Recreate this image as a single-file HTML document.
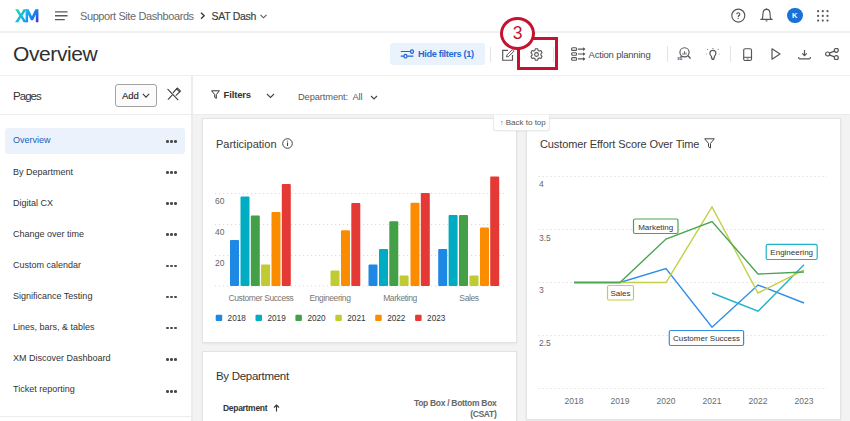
<!DOCTYPE html>
<html><head><meta charset="utf-8">
<style>
*{box-sizing:border-box;margin:0;padding:0}
html,body{width:850px;height:421px;overflow:hidden;background:#fff;font-family:"Liberation Sans",sans-serif;color:#2f3133}
.a{position:absolute;white-space:nowrap}
.hdr{position:absolute;left:0;top:0;width:850px;height:33px;background:#fff;border-bottom:2px solid #f0f0f0}
.title{position:absolute;left:0;top:33px;width:850px;height:43px;background:#fff;border-bottom:1px solid #efefef}
.side{position:absolute;left:0;top:76px;width:193px;height:345px;background:#fff;border-right:2px solid #ececec}
.main{position:absolute;left:193px;top:76px;width:657px;height:345px;background:#f3f3f3}
.fbar{position:absolute;left:193px;top:76px;width:657px;height:39px;background:#fff;border-bottom:1px solid #ececec}
.card{position:absolute;background:#fff;border:1px solid #e3e3e3;box-shadow:0 1px 2px rgba(0,0,0,.06)}
.item{position:absolute;left:13px;font-size:9px;color:#333;line-height:12px}
.dots{position:absolute;left:166px;width:11px;height:3px}
.dots i{position:absolute;top:0;width:2.7px;height:2.7px;border-radius:50%;background:#4a4a4a}
.sep{position:absolute;width:1px;background:#e3e3e3}
</style></head><body>

<!-- header -->
<div class="hdr"></div>
<svg class="a" style="left:15px;top:9px" width="25" height="14" viewBox="0 0 25 14">
 <defs><linearGradient id="xm" gradientUnits="userSpaceOnUse" x1="2" y1="1" x2="22" y2="14"><stop offset="0" stop-color="#1ed8b0"/><stop offset=".45" stop-color="#16a9ee"/><stop offset=".8" stop-color="#1d6fe8"/><stop offset="1" stop-color="#4a2de0"/></linearGradient></defs>
 <path fill="url(#xm)" d="M0.2 0.3h3.1l2.6 4.4 2.6-4.4h3.1L7.5 6.7l4.2 6.6H8.6L5.9 8.8 3.2 13.3H0l4.3-6.6z"/>
 <path fill="url(#xm)" d="M10.6 13.3V0.3h3l3.35 7 3.35-7h3.1v13h-2.6V5.6l-2.8 5.6h-2.1l-2.8-5.6v7.7z"/>
</svg>
<svg class="a" style="left:55px;top:11px" width="13" height="10" viewBox="0 0 13 10"><path d="M0 0.95h12.6M0 4.75h12.6M0 8.55h9.8" stroke="#5a5a5a" stroke-width="1.3"/></svg>
<div class="a" style="left:80px;top:10px;font-size:11px;color:#6a6a6a;letter-spacing:-0.4px">Support Site Dashboards</div>
<svg class="a" style="left:199.5px;top:12px" width="6" height="8" viewBox="0 0 6 8"><path d="M1 0.8l3.2 3L1 6.8" stroke="#333" stroke-width="1.3" fill="none"/></svg>
<div class="a" style="left:211.5px;top:10px;font-size:10.5px;color:#3a3a3a;letter-spacing:-0.3px;-webkit-text-stroke:0.15px #3a3a3a">SAT Dash</div>
<svg class="a" style="left:259.5px;top:13.5px" width="7" height="5" viewBox="0 0 7 5"><path d="M0.5 0.8l3 3 3-3" stroke="#555" stroke-width="1.05" fill="none"/></svg>

<svg class="a" style="left:730px;top:8px" width="16" height="16" viewBox="0 0 16 16"><circle cx="8.3" cy="7.6" r="6.5" stroke="#555" stroke-width="1.15" fill="none"/><path d="M6.8 6.2a1.5 1.5 0 1 1 2.1 1.4c-.4.2-.6.5-.6.9v.4" stroke="#555" stroke-width="1.15" fill="none"/><circle cx="8.3" cy="10.3" r=".65" fill="#555"/></svg>
<svg class="a" style="left:759px;top:7px" width="15" height="16" viewBox="0 0 15 16"><path d="M1.8 12.3h11.4" stroke="#555" stroke-width="1.2" stroke-linecap="round"/><path d="M3 12.2c.8-.9.9-2.5.9-5 0-2.8 1.6-4.8 3.6-4.8s3.6 2 3.6 4.8c0 2.5.1 4.1.9 5" stroke="#555" stroke-width="1.15" fill="none"/><circle cx="7.5" cy="2" r=".8" fill="#555"/><path d="M6.6 13.9h1.8" stroke="#555" stroke-width="1.1"/></svg>
<div class="a" style="left:787px;top:7.8px;width:15.5px;height:15.5px;border-radius:50%;background:#1b6fd8;color:#fff;font-size:7.5px;font-weight:700;text-align:center;line-height:15.5px">K</div>
<svg class="a" style="left:817px;top:10px" width="12" height="12" viewBox="0 0 12 12"><g fill="#5a5a5a"><circle cx="1.1" cy="1.2" r="1.1"/><circle cx="5.8" cy="1.2" r="1.1"/><circle cx="10.5" cy="1.2" r="1.1"/><circle cx="1.1" cy="5.9" r="1.1"/><circle cx="5.8" cy="5.9" r="1.1"/><circle cx="10.5" cy="5.9" r="1.1"/><circle cx="1.1" cy="10.6" r="1.1"/><circle cx="5.8" cy="10.6" r="1.1"/><circle cx="10.5" cy="10.6" r="1.1"/></g></svg>

<!-- title row -->
<div class="title"></div>
<div class="a" style="left:13px;top:41.5px;font-size:21px;color:#2d3033;letter-spacing:-0.4px">Overview</div>
<div class="a" style="left:389.5px;top:43px;width:95px;height:22px;background:#eaf2fc;border-radius:3px"></div>
<svg class="a" style="left:400px;top:48px" width="15" height="12" viewBox="0 0 15 12"><g stroke="#1a66d2" stroke-width="1.2" fill="none"><path d="M0.8 3.5h9.2M0.8 8.2h3.2M7.2 8.2h6.2"/><rect x="10.6" y="1.8" width="2.8" height="3.6" rx="1.3"/><rect x="4.1" y="6.4" width="2.8" height="3.6" rx="1.3"/></g></svg>
<div class="a" style="left:418px;top:48.5px;font-size:9.2px;font-weight:700;color:#1f6bd6;letter-spacing:-0.35px">Hide filters (1)</div>
<div class="sep" style="left:490px;top:47px;height:15px"></div>
<svg class="a" style="left:502px;top:49px" width="13" height="12" viewBox="0 0 13 12"><path d="M6 1.3H0.7v9.9h9.8V6" stroke="#555" stroke-width="1.15" fill="none"/><path d="M4.6 7.9l0.4-2 5.3-5.3 1.6 1.6-5.3 5.3z" stroke="#555" stroke-width="1" fill="none"/></svg>
<svg class="a" style="left:530px;top:48px" width="13" height="13" viewBox="0 0 13 13"><path d="M5.3 0.8h2.4l.4 1.6 1.2.7 1.6-.5 1.2 2.1-1.2 1.1v1.4l1.2 1.1-1.2 2.1-1.6-.5-1.2.7-.4 1.6H5.3l-.4-1.6-1.2-.7-1.6.5-1.2-2.1 1.2-1.1V5.8L.9 4.7l1.2-2.1 1.6.5 1.2-.7z" stroke="#555" stroke-width="1.1" fill="none" stroke-linejoin="round"/><circle cx="6.5" cy="6.5" r="1.9" stroke="#555" stroke-width="1.1" fill="none"/></svg>
<div class="sep" style="left:553px;top:47px;height:15px"></div>
<svg class="a" style="left:571px;top:47px" width="15" height="14" viewBox="0 0 15 14"><g stroke="#555" stroke-width="1.1" fill="none"><rect x=".6" y=".8" width="5" height="2.6" rx="1"/><rect x=".6" y="5.7" width="5" height="2.6" rx="1"/><rect x=".6" y="10.6" width="5" height="2.6" rx="1"/><path d="M7 2.1h6.5M7 7h6.5M7 11.9h6.5"/></g><g fill="#555"><path d="M12 0.3l2.5 1.8L12 3.9z"/><path d="M12 5.2l2.5 1.8L12 8.8z"/><path d="M12 10.1l2.5 1.8L12 13.7z"/></g></svg>
<div class="a" style="left:588.5px;top:48.5px;font-size:9.5px;color:#4a4a4a;letter-spacing:-0.2px">Action planning</div>
<div class="sep" style="left:667px;top:46px;height:16px"></div>
<svg class="a" style="left:677px;top:46px" width="15" height="15" viewBox="0 0 15 15"><circle cx="7.5" cy="6.3" r="4.6" stroke="#555" stroke-width="1.15" fill="none"/><path d="M10.9 9.7l2.7 2.8" stroke="#555" stroke-width="1.3"/><path d="M6 8.2V6.8M7.5 8.2V5.2M9 8.2V6.3" stroke="#777" stroke-width="1"/><path d="M5.2 8.4h4.4" stroke="#888" stroke-width=".6"/><text x="0.2" y="14" font-family="Liberation Sans" font-size="4.6" font-weight="700" fill="#555">x8</text></svg>
<svg class="a" style="left:705px;top:46px" width="15" height="15" viewBox="0 0 15 15"><path d="M6.5 12.2v-1.6c0-.6-1.6-1.5-1.6-3.2a3 3 0 0 1 6 0c0 1.7-1.6 2.6-1.6 3.2v1.6z" stroke="#555" stroke-width="1.15" fill="none" stroke-linejoin="round"/><path d="M6.6 13.4h2.6" stroke="#555" stroke-width="1.1"/><g fill="#888"><circle cx="2.6" cy="3.4" r=".55"/><circle cx="13.2" cy="3.4" r=".55"/><circle cx="1.3" cy="8.1" r=".5"/><circle cx="14.2" cy="8.1" r=".5"/><path d="M7.1 1.9h1.6v.8H7.1z"/></g></svg>
<div class="sep" style="left:730px;top:46px;height:16px"></div>
<svg class="a" style="left:742.5px;top:47.5px" width="10" height="14" viewBox="0 0 10 14"><rect x=".7" y=".7" width="7.8" height="11.8" rx="1.5" stroke="#555" stroke-width="1.15" fill="none"/><path d="M.7 9.3h7.8" stroke="#555" stroke-width="1"/><path d="M3.6 11h2" stroke="#555" stroke-width="1"/></svg>
<svg class="a" style="left:771px;top:48px" width="10" height="12" viewBox="0 0 10 12"><path d="M1 .8v10.4L9 6z" stroke="#555" stroke-width="1.2" fill="none" stroke-linejoin="round"/></svg>
<svg class="a" style="left:797.5px;top:49.5px" width="13" height="10" viewBox="0 0 13 10"><path d="M6.5 0v5.6M4.2 3.4l2.3 2.3 2.3-2.3" stroke="#555" stroke-width="1.2" fill="none"/><path d="M.7 6.9v.9c0 .7.4 1.1 1.1 1.1h9.4c.7 0 1.1-.4 1.1-1.1v-.9" stroke="#555" stroke-width="1.15" fill="none"/></svg>
<svg class="a" style="left:825px;top:48px" width="14" height="12" viewBox="0 0 14 12"><g stroke="#555" stroke-width="1.2" fill="none"><circle cx="2.6" cy="6" r="2"/><circle cx="11.3" cy="2.3" r="2"/><circle cx="11.3" cy="9.7" r="2"/><path d="M4.4 5.1l5-2M4.4 6.9l5 2"/></g></svg>

<!-- annotation -->
<div class="a" style="left:517px;top:37px;width:41px;height:32.5px;border:3px solid #c41230"></div>
<div class="a" style="left:500px;top:16.5px;width:35px;height:33px;border:3px solid #c41230;border-radius:50%;background:#fff"></div>
<div class="a" style="left:500px;top:23px;width:35px;text-align:center;font-size:17.5px;color:#c41230">3</div>

<!-- sidebar -->
<div class="side"></div>
<div class="a" style="left:0;top:114px;width:191px;height:1px;background:#ececec"></div>
<div class="a" style="left:13px;top:90px;font-size:11.5px;color:#333;letter-spacing:-0.95px">Pages</div>
<div class="a" style="left:115px;top:84px;width:41.5px;height:23px;border:1px solid #a3a3a3;border-radius:3px;background:#fbfbfb"></div>
<div class="a" style="left:122px;top:89.5px;font-size:9.5px;color:#2a2a2a;-webkit-text-stroke:0.15px #2a2a2a">Add</div>
<svg class="a" style="left:142px;top:93px" width="8" height="5" viewBox="0 0 8 5"><path d="M0.8 0.9l3.2 3.2 3.2-3.2" stroke="#3a3a3a" stroke-width="1.1" fill="none"/></svg>
<svg class="a" style="left:166px;top:87px" width="15" height="14" viewBox="0 0 15 14"><g stroke="#3a3a3a" stroke-width="1.05" fill="none" stroke-linecap="round" stroke-linejoin="round"><path d="M1.9 2.4L12 12.8"/><path d="M2.2 12.3l3.9-4.1"/><path d="M7.2 5.6l3.3-3.8 3.2 3.1-3.6 3.4"/><path d="M10.5 1.8l1 -0.8 2.9 2.9-0.7 1"/></g></svg>
<div class="a" style="left:5px;top:127.5px;width:180px;height:26px;background:#ebf2fc;border-radius:3px"></div>
<div class="item" style="top:134px;color:#1b5eb8">Overview</div>
<div class="item" style="top:165.5px">By Department</div>
<div class="item" style="top:196.5px">Digital CX</div>
<div class="item" style="top:227.5px">Change over time</div>
<div class="item" style="top:258.5px">Custom calendar</div>
<div class="item" style="top:289.5px">Significance Testing</div>
<div class="item" style="top:320.5px">Lines, bars, &amp; tables</div>
<div class="item" style="top:352px">XM Discover Dashboard</div>
<div class="item" style="top:383px">Ticket reporting</div>
<div class="dots" style="top:140px"><i style="left:0"></i><i style="left:4px"></i><i style="left:8px"></i></div>
<div class="dots" style="top:171px"><i style="left:0"></i><i style="left:4px"></i><i style="left:8px"></i></div>
<div class="dots" style="top:202px"><i style="left:0"></i><i style="left:4px"></i><i style="left:8px"></i></div>
<div class="dots" style="top:233px"><i style="left:0"></i><i style="left:4px"></i><i style="left:8px"></i></div>
<div class="dots" style="top:264.5px"><i style="left:0"></i><i style="left:4px"></i><i style="left:8px"></i></div>
<div class="dots" style="top:295.5px"><i style="left:0"></i><i style="left:4px"></i><i style="left:8px"></i></div>
<div class="dots" style="top:326.5px"><i style="left:0"></i><i style="left:4px"></i><i style="left:8px"></i></div>
<div class="dots" style="top:358px"><i style="left:0"></i><i style="left:4px"></i><i style="left:8px"></i></div>
<div class="dots" style="top:390px"><i style="left:0"></i><i style="left:4px"></i><i style="left:8px"></i></div>
<div class="a" style="left:0;top:416px;width:191px;height:1px;background:#ececec"></div>

<!-- main -->
<div class="main"></div>
<div class="fbar"></div>
<svg class="a" style="left:211px;top:90px" rx="1" width="9" height="9" viewBox="0 0 9 9"><path d="M.6 .8h7.8L5.3 4.6v3.8L3.7 7.4V4.6z" stroke="#333" stroke-width="1" fill="none" stroke-linejoin="round"/></svg>
<div class="a" style="left:223.5px;top:89px;font-size:9.5px;font-weight:700;color:#333;letter-spacing:-0.15px">Filters</div>
<svg class="a" style="left:265.5px;top:93px" width="9" height="6" viewBox="0 0 9 6"><path d="M1 1l3.5 3.5L8 1" stroke="#444" stroke-width="1.1" fill="none"/></svg>
<div class="a" style="left:298px;top:92px;font-size:9.3px;color:#5a5a5a;letter-spacing:-0.1px">Department:&nbsp; All</div>
<svg class="a" style="left:370px;top:95px" width="8" height="6" viewBox="0 0 8 6"><path d="M1 1l3 3 3-3" stroke="#444" stroke-width="1.1" fill="none"/></svg>

<!-- card 1 participation -->
<div class="card" style="left:202px;top:117.5px;width:314.6px;height:225px"></div>
<div class="a" style="left:216px;top:137.8px;font-size:11px;color:#3a3a3a">Participation</div>
<svg class="a" style="left:281.5px;top:137.5px" width="11" height="11" viewBox="0 0 11 11"><circle cx="5.5" cy="5.5" r="4.8" stroke="#444" stroke-width="1" fill="none"/><path d="M5.5 4.5v3.5" stroke="#444" stroke-width="1.1"/><circle cx="5.5" cy="3" r=".6" fill="#444"/></svg>

<svg class="a" style="left:202px;top:117px" width="314" height="225" viewBox="202 117 314 225">
 <g stroke="#d9d9d9" stroke-width="1" stroke-dasharray="1.2 2.8">
  <path d="M215 193.5H504"/><path d="M215 224.5H504"/><path d="M215 255.5H504"/><path d="M215 286H504"/>
 </g>
 <g font-family="Liberation Sans" font-size="8.5" fill="#666">
  <text x="215" y="204">60</text><text x="215" y="235">40</text><text x="215" y="266">20</text>
 </g>
 <g>
  <rect x="230" y="240" rx="1" width="9" height="46" fill="#1e88e5"/>
  <rect x="240.5" y="196.5" rx="1" width="9" height="89.5" fill="#00acc1"/>
  <rect x="250.8" y="215.5" rx="1" width="9" height="70.5" fill="#43a047"/>
  <rect x="261.1" y="264.5" rx="1" width="9" height="21.5" fill="#c0ca33"/>
  <rect x="271.5" y="212" rx="1" width="9" height="74" fill="#fb8c00"/>
  <rect x="281.8" y="184" rx="1" width="9" height="102" fill="#e53935"/>

  <rect x="330.5" y="270.6" rx="1" width="9" height="15.4" fill="#c0ca33"/>
  <rect x="341" y="230.2" rx="1" width="9" height="55.8" fill="#fb8c00"/>
  <rect x="351.3" y="203" rx="1" width="9" height="83" fill="#e53935"/>

  <rect x="368.5" y="264.5" rx="1" width="9" height="21.5" fill="#1e88e5"/>
  <rect x="379" y="249" rx="1" width="9" height="37" fill="#00acc1"/>
  <rect x="389.3" y="221.2" rx="1" width="9" height="64.8" fill="#43a047"/>
  <rect x="399.6" y="275.6" rx="1" width="9" height="10.4" fill="#c0ca33"/>
  <rect x="410.5" y="202.7" rx="1" width="9" height="83.3" fill="#fb8c00"/>
  <rect x="420.8" y="193.1" rx="1" width="9" height="92.9" fill="#e53935"/>

  <rect x="438.2" y="249" rx="1" width="9" height="37" fill="#1e88e5"/>
  <rect x="448.6" y="215" rx="1" width="9" height="71" fill="#00acc1"/>
  <rect x="459" y="215" rx="1" width="9" height="71" fill="#43a047"/>
  <rect x="469.5" y="275.6" rx="1" width="9" height="10.4" fill="#c0ca33"/>
  <rect x="480" y="227.4" rx="1" width="9" height="58.6" fill="#fb8c00"/>
  <rect x="490.2" y="176.4" rx="1" width="9" height="109.6" fill="#e53935"/>
 </g>
 <g font-family="Liberation Sans" font-size="8.5" fill="#777" text-anchor="middle" letter-spacing="-0.4">
  <text x="261" y="301">Customer Success</text>
  <text x="330" y="301">Engineering</text>
  <text x="400" y="301">Marketing</text>
  <text x="469" y="301">Sales</text>
 </g>
 <g>
  <rect x="215.7" y="314.7" width="6.5" height="6.3" rx="1" fill="#1e88e5"/>
  <rect x="255.5" y="314.7" width="6.5" height="6.3" rx="1" fill="#00acc1"/>
  <rect x="295.4" y="314.7" width="6.5" height="6.3" rx="1" fill="#43a047"/>
  <rect x="335.3" y="314.7" width="6.5" height="6.3" rx="1" fill="#c0ca33"/>
  <rect x="375.2" y="314.7" width="6.5" height="6.3" rx="1" fill="#fb8c00"/>
  <rect x="415.1" y="314.7" width="6.5" height="6.3" rx="1" fill="#e53935"/>
 </g>
 <g font-family="Liberation Sans" font-size="8.2" fill="#333">
  <text x="227.6" y="321.3">2018</text><text x="267.5" y="321.3">2019</text><text x="307.4" y="321.3">2020</text>
  <text x="347.3" y="321.3">2021</text><text x="387.2" y="321.3">2022</text><text x="427.1" y="321.3">2023</text>
 </g>
</svg>


<div class="a" style="z-index:5;left:493px;top:114px;width:57px;height:17px;background:#fff;border:1px solid #e9e9e9;border-top:1px solid #f0f0f0;border-radius:0 0 3px 3px;font-size:8px;color:#555;line-height:15px;padding-left:6px;box-shadow:0 1px 1px rgba(0,0,0,.04)"><span style="font-size:7px;position:relative;top:-0.5px">↑</span> Back to top</div>

<!-- card 2 line chart -->
<div class="card" style="left:526px;top:118px;width:314.6px;height:302px"></div>
<div class="a" style="left:540px;top:137.8px;font-size:11px;color:#3a3a3a;letter-spacing:-0.1px">Customer Effort Score Over Time</div>
<svg class="a" style="left:704px;top:138px" width="11" height="11" viewBox="0 0 11 11"><path d="M.7 .8h9.6L6.5 5.4v4.6L4.5 8.8V5.4z" stroke="#444" stroke-width="1" fill="none" stroke-linejoin="round"/></svg>

<svg class="a" style="left:527px;top:118px" width="313" height="302" viewBox="527 118 313 302">
 <g stroke="#d9d9d9" stroke-width="1" stroke-dasharray="1.2 2.8">
  <path d="M538.5 176.5H827"/><path d="M538.5 229.5H827"/><path d="M538.5 282.5H827"/><path d="M538.5 335.5H827"/><path d="M538.5 388.5H827"/>
 </g>
 <g font-family="Liberation Sans" font-size="8.5" fill="#666">
  <text x="539" y="187">4</text><text x="539" y="241">3.5</text><text x="539" y="293">3</text><text x="539" y="346">2.5</text>
 </g>
 <g font-family="Liberation Sans" font-size="8.5" fill="#6b6b6b" text-anchor="middle">
  <text x="574" y="404">2018</text><text x="620" y="404">2019</text><text x="666" y="404">2020</text>
  <text x="712" y="404">2021</text><text x="758" y="404">2022</text><text x="804" y="404">2023</text>
 </g>
 <g fill="none" stroke-width="1.4" stroke-linejoin="miter">
  <polyline points="574,282.5 620,282.5 666,268.5 712,327.3 758,285 804,303" stroke="#2f8fe6"/>
  <polyline points="712,293 758,311.2 804,264.7" stroke="#1fb2c8"/>
  <polyline points="574,282.5 620,282.5 666,282.5 712,207 758,293 804,270" stroke="#c4cf47"/>
  <polyline points="574,282.5 620,282.5 666,239 712,221.5 758,274 804,272" stroke="#4aa552"/>
 </g>
 <g font-family="Liberation Sans" font-size="8" fill="#333">
  <rect x="633.5" y="219" width="44.5" height="14.5" rx="1.5" fill="#fff" stroke="#4aa552" stroke-width="1.2"/>
  <text x="655.7" y="229.5" text-anchor="middle">Marketing</text>
  <rect x="607.5" y="285.5" width="26" height="14.5" rx="1.5" fill="#fff" stroke="#c4cf47" stroke-width="1.2"/>
  <text x="620.5" y="296" text-anchor="middle">Sales</text>
  <rect x="766.2" y="244.4" width="51" height="15.1" rx="1.5" fill="#fff" stroke="#1fb2c8" stroke-width="1.2"/>
  <text x="791.7" y="255" text-anchor="middle">Engineering</text>
  <rect x="669.3" y="330.5" width="74.3" height="15" rx="1.5" fill="#fff" stroke="#2f8fe6" stroke-width="1.2"/>
  <text x="706.5" y="341.3" text-anchor="middle">Customer Success</text>
 </g>
</svg>

<!-- card 3 -->
<div class="card" style="left:202px;top:351px;width:314.5px;height:80px"></div>
<div class="a" style="left:216px;top:370px;font-size:11.5px;color:#333;letter-spacing:-0.3px">By Department</div>
<div class="a" style="left:223px;top:403px;font-size:8.5px;font-weight:700;color:#333;letter-spacing:-0.3px">Department</div>
<svg class="a" style="left:273px;top:403.5px" width="7" height="8" viewBox="0 0 7 8"><path d="M3.5 7.5V1M1 3.5l2.5-2.5L6 3.5" stroke="#333" stroke-width="1.1" fill="none"/></svg>
<div class="a" style="left:396px;top:397.5px;width:100.5px;text-align:right;font-size:8.5px;font-weight:700;color:#666;line-height:11px;white-space:normal;letter-spacing:-0.3px">Top Box / Bottom Box<br>(CSAT)</div>

</body></html>
